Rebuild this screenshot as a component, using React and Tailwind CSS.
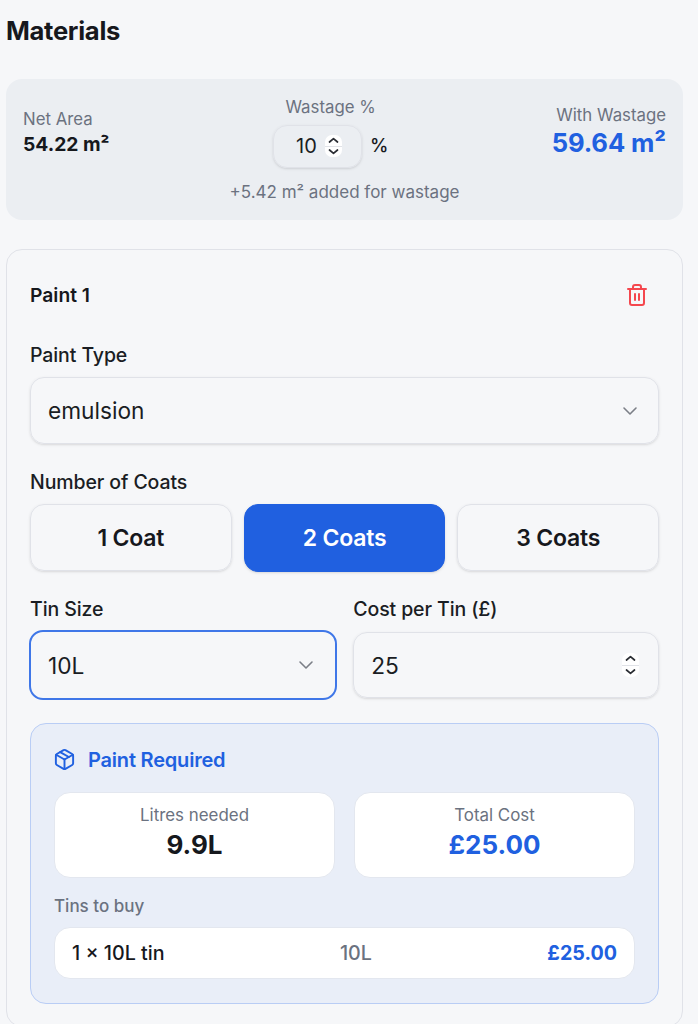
import React from "react";
import { Trash2, ChevronDown, Package } from "lucide-react";

const font = { fontFamily: "Inter, sans-serif" };

function Spinner({ tall }) {
  return (
    <span className={tall ? "flex h-[24px] w-[17px] flex-col rounded-[7px] bg-white" : "flex h-[22px] w-[17px] flex-col rounded-[7px] bg-white"}>
      <span className="flex flex-1 items-center justify-center border-b border-[#e0e2e7]">
        <svg width="11" height="7" viewBox="0 0 11 7" fill="none" stroke="#2a2d33" strokeWidth="1.7" strokeLinecap="round" strokeLinejoin="round">
          <path d="M1.5 5 L5.5 1.7 L9.5 5" />
        </svg>
      </span>
      <span className="flex flex-1 items-center justify-center">
        <svg width="11" height="7" viewBox="0 0 11 7" fill="none" stroke="#2a2d33" strokeWidth="1.7" strokeLinecap="round" strokeLinejoin="round">
          <path d="M1.5 2 L5.5 5.3 L9.5 2" />
        </svg>
      </span>
    </span>
  );
}

function Field({ label, children, className = "" }) {
  return (
    <div className={className}>
      <div className="text-[19.5px] leading-[22px] font-medium tracking-[-0.1px] text-[#1a1d23]">{label}</div>
      {children}
    </div>
  );
}

function Coat({ children, active }) {
  return (
    <div
      className={
        active
          ? "flex h-[68px] flex-1 items-center justify-center rounded-[14px] border border-[#2060e0] bg-[#2060e0] pt-[2px] text-[23px] font-semibold tracking-[-0.2px] text-white shadow-sm"
          : "flex h-[67px] flex-1 items-center justify-center rounded-[14px] border border-[#e0e2e8] pt-[2px] text-[23px] font-semibold tracking-[-0.2px] text-[#16181d] shadow-sm"
      }
    >
      {children}
    </div>
  );
}

export default function App() {
  return (
    <div style={font} className="h-[1024px] w-[698px] overflow-hidden bg-[#f6f7f9] pl-[6px] pr-[15px] text-[#16181d]">
      <h2 className="pt-[15px] text-[25.6px] leading-[32px] font-bold tracking-[-0.3px] text-[#16181d]">Materials</h2>

      <section className="mt-[32px] h-[141px] rounded-[16px] bg-[#ebeef2] px-[17px] pt-[17.5px]">
        <div className="flex items-center justify-between">
          <div>
            <div className="text-[16.8px] leading-[20px] text-[#6b7280]">Net Area</div>
            <div className="mt-[3px] text-[19.3px] leading-[24px] font-bold">54.22 m²</div>
          </div>
          <div className="flex flex-col items-center">
            <div className="text-[16.8px] leading-[20px] text-[#6b7280]">Wastage %</div>
            <div className="mt-[8px] flex items-center">
              <div className="flex h-[43px] w-[89px] items-center justify-end gap-[8px] rounded-[14px] border border-[#e0e2e8] pr-[19px] text-[20px] text-[#1a1d23] shadow-sm">
                <span>10</span>
                <Spinner />
              </div>
              <span className="ml-[8px] text-[18.5px] font-medium">%</span>
            </div>
          </div>
          <div className="flex flex-col items-end">
            <div className="text-[16.8px] leading-[20px] text-[#6b7280]">With Wastage</div>
            <div className="mt-[2px] text-[25.6px] leading-[32px] font-bold tracking-[-0.1px] text-[#2060e0]">59.64 m²</div>
          </div>
        </div>
        <div className="mt-[14px] text-center text-[17px] leading-[20px] text-[#6b7280]">+5.42 m² added for wastage</div>
      </section>

      <section className="mt-[29px] rounded-[16px] border border-[#e0e2e8] px-[23px] pt-[32px] pb-[22px]">
        <div className="flex items-center justify-between pr-[10px]">
          <div className="text-[19.3px] leading-[26px] font-semibold">Paint 1</div>
          <Trash2 size={24} color="#f4474e" strokeWidth={2} />
        </div>

        <Field label="Paint Type" className="mt-[36px]">
          <div className="mt-[11px] flex h-[67px] items-center justify-between rounded-[14px] border border-[#e0e2e8] pl-[17px] pr-[16px] text-[22.7px] text-[#1a1d23] shadow-sm">
            <span className="pt-[2px]">emulsion</span>
            <ChevronDown size={24} color="#7b7f87" strokeWidth={1.6} />
          </div>
        </Field>

        <Field label="Number of Coats" className="mt-[27px]">
          <div className="mt-[11px] flex h-[67px] items-center gap-[12px]">
            <Coat>1 Coat</Coat>
            <Coat active>2 Coats</Coat>
            <Coat>3 Coats</Coat>
          </div>
        </Field>

        <div className="mt-[27px] flex gap-[17.5px]">
          <Field label="Tin Size" className="flex-1">
            <div className="-mx-[1px] mt-[10px] flex h-[70px] items-center justify-between rounded-[14px] border-2 border-[#3f77e8] pl-[17px] pr-[17px] text-[22.7px] text-[#1a1d23]">
              <span className="pt-[2px]">10L</span>
              <ChevronDown size={24} color="#7b7f87" strokeWidth={1.6} />
            </div>
          </Field>
          <Field label="Cost per Tin (£)" className="flex-1">
            <div className="mt-[12px] flex h-[66px] items-center justify-between rounded-[14px] border border-[#e0e2e8] pl-[17px] pr-[19px] text-[22.7px] text-[#1a1d23] shadow-sm">
              <span className="pt-[2px]">25</span>
              <Spinner tall />
            </div>
          </Field>
        </div>

        <div className="mt-[22.5px] rounded-[16px] border border-[#b9cdf5] bg-[#e9eef8] px-[23px] pt-[21px] pb-[24px]">
          <div className="flex items-center gap-[12px] text-[20px] leading-[30px] font-semibold tracking-[-0.2px] text-[#2060e0]">
            <Package size={23} strokeWidth={2} className="-ml-[1px]" />
            <span>Paint Required</span>
          </div>
          <div className="mt-[17px] flex gap-[19px]">
            <div className="flex h-[86px] flex-1 flex-col items-center rounded-[16px] border border-[#e3e7ef] bg-white pt-[12px]">
              <div className="text-[16.9px] leading-[20px] text-[#6b7280]">Litres needed</div>
              <div className="mt-[4px] text-[26px] leading-[32px] font-bold">9.9L</div>
            </div>
            <div className="flex h-[86px] flex-1 flex-col items-center rounded-[16px] border border-[#e3e7ef] bg-white pt-[12px]">
              <div className="text-[16.9px] leading-[20px] text-[#6b7280]">Total Cost</div>
              <div className="mt-[4px] text-[26px] leading-[32px] font-bold text-[#2060e0]">£25.00</div>
            </div>
          </div>
          <div className="mt-[18.5px] text-[17px] leading-[20px] font-medium text-[#6b7280]">Tins to buy</div>
          <div className="mt-[11px] flex h-[52px] items-center justify-between rounded-[16px] border border-[#e3e7ef] bg-white px-[17px] pt-[1px] text-[19.7px]">
            <span className="font-medium">1 × 10L tin</span>
            <span className="font-medium text-[#6b7280]">10L</span>
            <span className="font-bold text-[#2060e0]">£25.00</span>
          </div>
        </div>
      </section>
    </div>
  );
}
